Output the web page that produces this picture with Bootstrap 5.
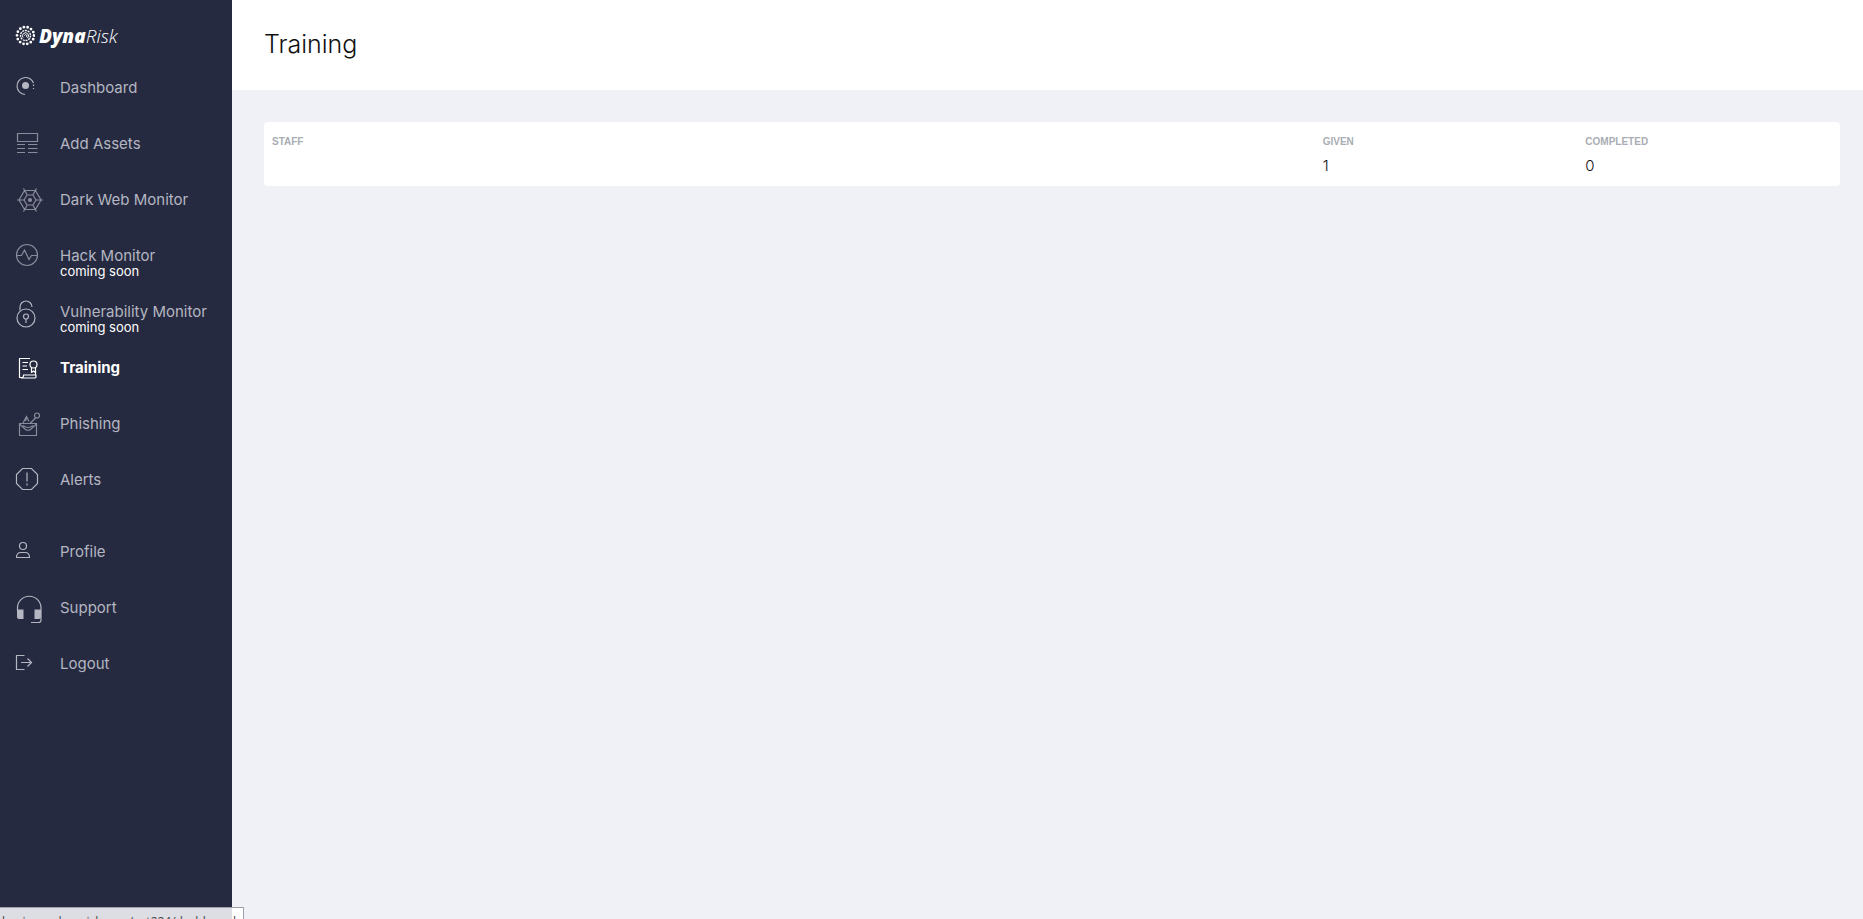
<!DOCTYPE html>
<html lang="en">
<head>
<meta charset="utf-8">
<meta name="viewport" content="width=device-width, initial-scale=1">
<title>Training</title>
<link href="https://cdn.jsdelivr.net/npm/bootstrap@5.3.0/dist/css/bootstrap.min.css" rel="stylesheet">
<style>
  body { background: #eff1f6; font-family: Inter, sans-serif; color: #111; }
  .side { width: 232px; background: #262a40; }
  .brand { height: 59px; padding: 24px 16px 0 15px; color: #fff; font: italic 300 19px/24px "Open Sans", sans-serif; }
  .brand b { font-weight: 800; }
  .side-link { height: 56px; padding: 12px 16px 0; color: #b4b6c2; font-size: 15px; line-height: 20px; text-decoration: none; }
  .side-link:hover { color: #fff; }
  .side-link svg { width: 28px; height: 32px; overflow: visible; fill: none; stroke: currentColor; stroke-width: 1.200; }
  .side-link .caption { padding-top: 7px; white-space: nowrap; }
  .side-link .soon { color: #fff; font-size: 13px; line-height: 10px; }
  .side-link.active { color: #fff; font-weight: 700; }
  .dim { opacity: .7; }
  .topbar { height: 90px; padding: 28px 32px; }
  .topbar h1 { font-size: 25px; line-height: 32px; font-weight: 300; }
  .content { padding: 32px 23px 32px 32px; }
  .panel { border-radius: 4px; padding: 10px 0 8px; }
  .panel th { width: 16.6667%; padding: 0 8px; font: bold 10px/20px "Liberation Sans", Arial, sans-serif; color: #a9adb5; }
  .panel th:first-child { width: 66.6667%; }
  .panel td { padding: 2px 8px 0; font-size: 15px; line-height: 24px; font-weight: 300; }
  .status { width: 244px; height: 12px; padding: 6px 2px 0; border: 1px solid #9da0a8; border-width: 1px 1px 0 0; background: linear-gradient(90deg, #dddee3 232px, #fff 232px); color: #444; font: 12px/16px "Open Sans", sans-serif; white-space: nowrap; }
</style>
</head>
<body>
<div class="d-flex min-vh-100">
  <nav class="side flex-shrink-0" aria-label="Main">
    <div class="brand d-flex gap-1">
      <svg width="20" height="24" viewBox="0 0 20 24" fill="none" stroke="#fff" aria-hidden="true">
        <circle cx="10.500" cy="11.500" r="8.500" stroke-width="2.800" stroke-linecap="round" stroke-dasharray="0 3.814"/>
        <circle cx="10.500" cy="11.500" r="5" stroke-width="1.400" stroke-dasharray="2 .8"/>
        <path d="M8 13.500a3 3 0 1 1 4.500.500M9.500 11.500a1.200 1.200 0 1 1 1.500 1.500" stroke-width="1"/>
      </svg>
      <span><b>Dyna</b>Risk</span>
    </div>
    <a class="side-link d-flex gap-3" href="#">
      <svg viewBox="0 0 28 32"><path d="M9 23.500A8.500 8.500 0 1 1 17.500 12"/><circle cx="9.500" cy="14.500" r="3.500" fill="currentColor" stroke="none"/><path d="M17.500 13.500v1.500M17.500 17v1"/></svg>
      <span class="caption">Dashboard</span></a>
    <a class="side-link d-flex gap-3" href="#">
      <svg class="dim" viewBox="0 0 28 32"><path d="M1.500 6.500h20v8h-20zM1 17.500h8M12 17.500h9.500M1 21.500h8M12 21.500h9.500M1 25.500h8M12 25.500h9.500"/></svg>
      <span class="caption">Add Assets</span></a>
    <a class="side-link d-flex gap-3" href="#">
      <svg class="dim" viewBox="0 0 28 32"><path d="M8.500 7.500h11l5.500 9.500-5.500 9.500h-11L3 17zM11 12h6l3 5-3 5h-6l-3-5zM1 17h8M19 17h8M7.500 5.500l4 7M20.500 5.500l-4 7M7.500 28.500l4-7M20.500 28.500l-4-7"/><circle cx="14" cy="17" r="1.500" fill="currentColor"/></svg>
      <span class="caption">Dark Web Monitor</span></a>
    <a class="side-link d-flex gap-3" href="#">
      <svg class="dim" viewBox="0 0 28 32"><circle cx="11" cy="16" r="10.500"/><path d="M.5 16.500h5L8.500 11l4.500 9.500 2.500-4h6"/></svg>
      <span class="caption d-flex flex-column">Hack Monitor<span class="soon">coming soon</span></span></a>
    <a class="side-link d-flex gap-3" href="#">
      <svg viewBox="0 0 28 32"><circle cx="10" cy="23" r="9"/><path d="M4 15.500V12a6 6 0 0 1 12 0"/><circle cx="10" cy="21.500" r="2.500"/><path d="M10 24v4"/></svg>
      <span class="caption d-flex flex-column">Vulnerability Monitor<span class="soon">coming soon</span></span></a>
    <a class="side-link active d-flex gap-3" href="#" aria-current="page">
      <svg viewBox="0 0 28 32" stroke-linejoin="round"><path d="M14 7.500H3.500v19h2a2 2 0 0 0 2-2.500h12.500v2q0 1-1.500 1H5M19.500 20v4M6.500 11.500H12M6.500 15H11M6.500 18.500H12"/><circle cx="17.500" cy="13.500" r="3.500"/><path d="M15.500 17v4.500l2-1.500 2 1.500V17"/></svg>
      <span class="caption">Training</span></a>
    <a class="side-link d-flex gap-3" href="#">
      <svg class="dim" viewBox="0 0 28 32"><path d="M3.500 16.500h17v12h-17zM3.500 17l6 5.500q2.500 1.500 5 0l6-5.500M7 18.500q5 4 10 0M7 16l3.500-6.500 2.500 5M9.500 14l1-4M14 16.500l6-6"/><circle cx="21" cy="8.500" r="2.500"/></svg>
      <span class="caption">Phishing</span></a>
    <a class="side-link d-flex gap-3" href="#">
      <svg viewBox="0 0 28 32"><path d="M6.500 5.500h9l6 6v9l-6 6h-9l-6-6v-9zM11 9.500v9M11 20.500v2"/></svg>
      <span class="caption">Alerts</span></a>
    <a class="side-link d-flex gap-3 mt-3" href="#">
      <svg viewBox="0 0 28 32"><circle cx="7" cy="11" r="3.500"/><path d="M.5 22.500q0-5 4.500-5h4q4.500 0 4.500 5z"/></svg>
      <span class="caption">Profile</span></a>
    <a class="side-link d-flex gap-3" href="#">
      <svg viewBox="0 0 28 32"><path d="M1.500 20v-3a11.500 11.500 0 0 1 23.500 0v12q0 2.500-2.500 2.500H15"/><path d="M1 18.500h6.500V28H3q-2 0-2-2zM18.500 18.500H25V26q0 2-2 2h-4.500z" fill="currentColor" stroke="none"/></svg>
      <span class="caption">Support</span></a>
    <a class="side-link d-flex gap-3" href="#">
      <svg viewBox="0 0 28 32"><path d="M8.500 8.500h-8v14h8M5 15.500h10.500M11.500 11.500l4 4-4 4"/></svg>
      <span class="caption">Logout</span></a>
  </nav>
  <main class="flex-grow-1">
    <header class="topbar bg-white"><h1 class="m-0">Training</h1></header>
    <div class="content">
      <div class="panel bg-white">
        <table class="w-100">
          <thead><tr><th scope="col">STAFF</th><th scope="col">GIVEN</th><th scope="col">COMPLETED</th></tr></thead>
          <tbody><tr><td></td><td>1</td><td>0</td></tr></tbody>
        </table>
      </div>
    </div>
  </main>
</div>
<div class="status position-fixed bottom-0 start-0 overflow-hidden">business.dynarisk.com/get224/dashboard</div>
<script src="https://cdn.jsdelivr.net/npm/bootstrap@5.3.0/dist/js/bootstrap.bundle.min.js"></script>
</body>
</html>
